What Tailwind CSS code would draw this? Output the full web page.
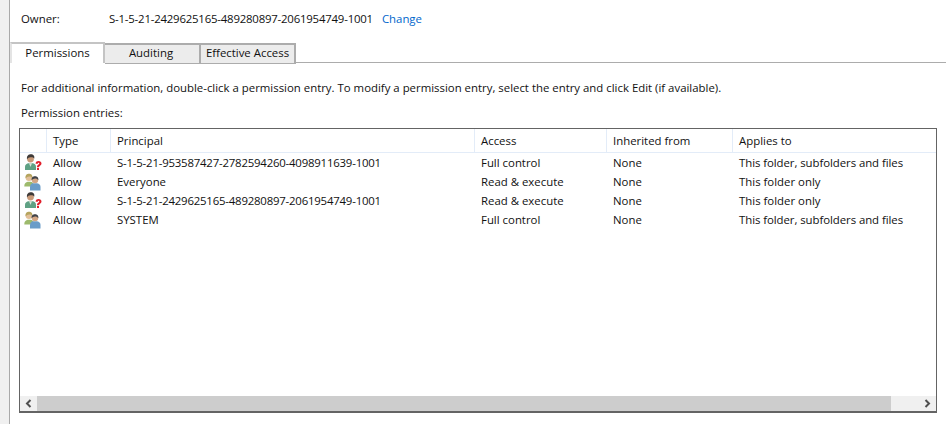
<!doctype html>
<html>
<head>
    <meta charset="UTF-8">
    <title>Permissions</title>
    <script src="https://cdn.jsdelivr.net/npm/@tailwindcss/browser@4"></script>
</head>
<body class="bg-white">
<div class="w-[946px] h-[424px] overflow-hidden flex bg-[#f0f0f0] font-['Open_Sans',sans-serif] text-[11.4px] text-[#111]">
    <div class="ml-[9px] w-[937px] h-full bg-white border-l border-[#a9a9a9] flex flex-col">

        <!-- owner -->
        <div class="flex h-[19px] mt-[9px] ml-[11px] items-center">
            <span class="w-[88px]">Owner:</span>
            <span class="tracking-[-0.2px]">S-1-5-21-2429625165-489280897-2061954749-1001</span>
            <span class="ml-[9px] text-[#0066cc]">Change</span>
        </div>

        <!-- tabs -->
        <div class="flex h-[21px] mt-[14px] items-start border-b border-[#acacac]">
            <div class="w-[95px] h-[21px] pb-[2px] bg-white border-2 border-b-0 border-[#c4c4c4] border-l-[#e4e4e4] flex items-center justify-center">Permissions</div>
            <div class="w-[96px] h-[21px] mt-px pb-[3px] pr-[2px] bg-[#ececec] border border-t-2 border-r-2 border-[#acacac] border-l-0 flex items-center justify-center">Auditing</div>
            <div class="w-[95px] h-[21px] mt-px pb-[3px] bg-[#ececec] border border-t-2 border-r-2 border-[#acacac] border-l-0 flex items-center justify-center">Effective Access</div>
        </div>

        <div class="ml-[11px] mt-[15px] h-[19px] flex items-center">For additional information, double-click a permission entry. To modify a permission entry, select the entry and click Edit (if available).</div>
        <div class="ml-[11px] mt-[6px] h-[19px] flex items-center">Permission entries:</div>

        <!-- list view -->
        <div class="ml-[9px] mt-[6px] w-[918px] h-[285px] border border-[#646464] border-b-2 flex flex-col">
            <div class="grid grid-cols-[27px_64px_364px_132px_126px_1fr] h-[24px] border-b border-[#e3ecf8]">
                <div class="border-r border-[#e3ecf8]"></div>
                <div class="pl-[6px] flex items-center border-r border-[#e3ecf8]">Type</div>
                <div class="pl-[6px] flex items-center border-r border-[#e3ecf8]">Principal</div>
                <div class="pl-[6px] flex items-center border-r border-[#e3ecf8]">Access</div>
                <div class="pl-[6px] flex items-center border-r border-[#e3ecf8]">Inherited from</div>
                <div class="pl-[6px] flex items-center">Applies to</div>
            </div>

            <div class="flex-1 grid grid-cols-[27px_64px_364px_132px_126px_1fr] auto-rows-[19px] content-start">
                <div class="flex items-center pl-[5px]"><svg width="17" height="17" viewBox="0 0 17 17"><path d="M0 16v-3.500C0 10.500 2 9.400 3.500 9.200h4c1.800.2 3.500 1.300 3.500 3.200V16z" fill="#5fa184"/><path d="M4 9.200 5.500 13 7 9.200z" fill="#d8e4d8"/><circle cx="5.500" cy="5" r="3.400" fill="#c99a78"/><path d="M2 5.500C1.400 1.600 3.800.3 6 .3c2.300 0 3.900 1.600 3.200 4.500C8.400 3.200 7 3 5.500 3.200 4 3.300 2.800 3.900 2 5.500z" fill="#3e3a38"/><path d="M10.500 9.500c.3-1.700 1.500-2.500 3-2.500 1.800 0 3 1.100 3 2.500 0 2-2.300 2-2.500 3.800h-2c-.2-2.600 2.300-2.700 2.300-3.800 0-.9-1.500-.9-1.800.4z" fill="#e0202c"/><rect x="12" y="14" width="2" height="2" fill="#e0202c"/></svg></div>
                <div class="pl-[6px] flex items-center">Allow</div>
                <div class="pl-[6px] flex items-center tracking-[-0.2px]">S-1-5-21-953587427-2782594260-4098911639-1001</div>
                <div class="pl-[6px] flex items-center">Full control</div>
                <div class="pl-[6px] flex items-center">None</div>
                <div class="pl-[6px] flex items-center whitespace-nowrap tracking-[-0.06px]">This folder, subfolders and files</div>

                <div class="flex items-center pl-[4px]"><svg width="18" height="18" viewBox="0 0 18 18"><path d="M.3 13c0-2.600 1.700-3.900 3.400-4.200h3c1.700.3 2.800 1.400 2.800 3.100V13.500H.3z" fill="#9dba6c"/><circle cx="5" cy="4.800" r="3.300" fill="#e2bf98"/><path d="M1.600 5.500C1 2 3 .8 5 .8s4 1.300 3.400 4.500C7.600 3.500 6 3.300 5 3.400 3.800 3.500 2.400 4 1.600 5.500z" fill="#b5a45e"/><path d="M6 17.500v-3.700c0-2 1.700-3.300 3.200-3.500h3.600c1.800.2 3.700 1.400 3.700 3.400v3.800z" fill="#6a9cc8"/><circle cx="11" cy="7" r="3.200" fill="#d3a583"/><path d="M7.700 7.500C7.200 4.200 9 3.200 11 3.200s3.800 1.100 3.300 4.100c-.8-1.600-2.200-1.900-3.300-1.800-1.400.1-2.500.6-3.300 2z" fill="#3f4248"/></svg></div>
                <div class="pl-[6px] flex items-center">Allow</div>
                <div class="pl-[6px] flex items-center">Everyone</div>
                <div class="pl-[6px] flex items-center">Read &amp; execute</div>
                <div class="pl-[6px] flex items-center">None</div>
                <div class="pl-[6px] flex items-center whitespace-nowrap">This folder only</div>

                <div class="flex items-center pl-[5px]"><svg width="17" height="17" viewBox="0 0 17 17"><path d="M0 16v-3.500C0 10.500 2 9.400 3.500 9.200h4c1.800.2 3.500 1.300 3.500 3.200V16z" fill="#5fa184"/><path d="M4 9.200 5.500 13 7 9.200z" fill="#d8e4d8"/><circle cx="5.500" cy="5" r="3.400" fill="#c99a78"/><path d="M2 5.500C1.400 1.600 3.800.3 6 .3c2.300 0 3.900 1.600 3.200 4.500C8.400 3.200 7 3 5.500 3.200 4 3.300 2.800 3.900 2 5.500z" fill="#3e3a38"/><path d="M10.500 9.500c.3-1.700 1.500-2.500 3-2.500 1.800 0 3 1.100 3 2.500 0 2-2.300 2-2.500 3.800h-2c-.2-2.600 2.300-2.700 2.300-3.800 0-.9-1.500-.9-1.800.4z" fill="#e0202c"/><rect x="12" y="14" width="2" height="2" fill="#e0202c"/></svg></div>
                <div class="pl-[6px] flex items-center">Allow</div>
                <div class="pl-[6px] flex items-center tracking-[-0.2px]">S-1-5-21-2429625165-489280897-2061954749-1001</div>
                <div class="pl-[6px] flex items-center">Read &amp; execute</div>
                <div class="pl-[6px] flex items-center">None</div>
                <div class="pl-[6px] flex items-center whitespace-nowrap">This folder only</div>

                <div class="flex items-center pl-[4px]"><svg width="18" height="18" viewBox="0 0 18 18"><path d="M.3 13c0-2.600 1.700-3.900 3.400-4.200h3c1.700.3 2.800 1.400 2.800 3.100V13.500H.3z" fill="#9dba6c"/><circle cx="5" cy="4.800" r="3.300" fill="#e2bf98"/><path d="M1.600 5.500C1 2 3 .8 5 .8s4 1.300 3.400 4.500C7.600 3.500 6 3.300 5 3.400 3.800 3.500 2.400 4 1.600 5.500z" fill="#b5a45e"/><path d="M6 17.500v-3.700c0-2 1.700-3.300 3.200-3.500h3.600c1.800.2 3.700 1.400 3.700 3.400v3.800z" fill="#6a9cc8"/><circle cx="11" cy="7" r="3.200" fill="#d3a583"/><path d="M7.700 7.500C7.200 4.200 9 3.200 11 3.200s3.800 1.100 3.300 4.100c-.8-1.600-2.200-1.900-3.300-1.800-1.400.1-2.500.6-3.300 2z" fill="#3f4248"/></svg></div>
                <div class="pl-[6px] flex items-center">Allow</div>
                <div class="pl-[6px] flex items-center">SYSTEM</div>
                <div class="pl-[6px] flex items-center">Full control</div>
                <div class="pl-[6px] flex items-center">None</div>
                <div class="pl-[6px] flex items-center whitespace-nowrap tracking-[-0.06px]">This folder, subfolders and files</div>
            </div>

            <!-- horizontal scrollbar -->
            <div class="h-[15px] bg-[#f0f0f0] flex items-center">
                <div class="w-[17px] h-full flex items-center justify-center"><svg width="9" height="9" viewBox="0 0 9 9"><path d="M6.500 1 3 4.500 6.500 8" fill="none" stroke="#505050" stroke-width="2"/></svg></div>
                <div class="w-[854px] h-full bg-[#cdcdcd]"></div>
                <div class="flex-1 h-full flex items-center justify-end pr-[4px]"><svg width="9" height="9" viewBox="0 0 9 9"><path d="M2.500 1 6 4.500 2.500 8" fill="none" stroke="#505050" stroke-width="2"/></svg></div>
            </div>
        </div>
    </div>
</div>
</body>
</html>
